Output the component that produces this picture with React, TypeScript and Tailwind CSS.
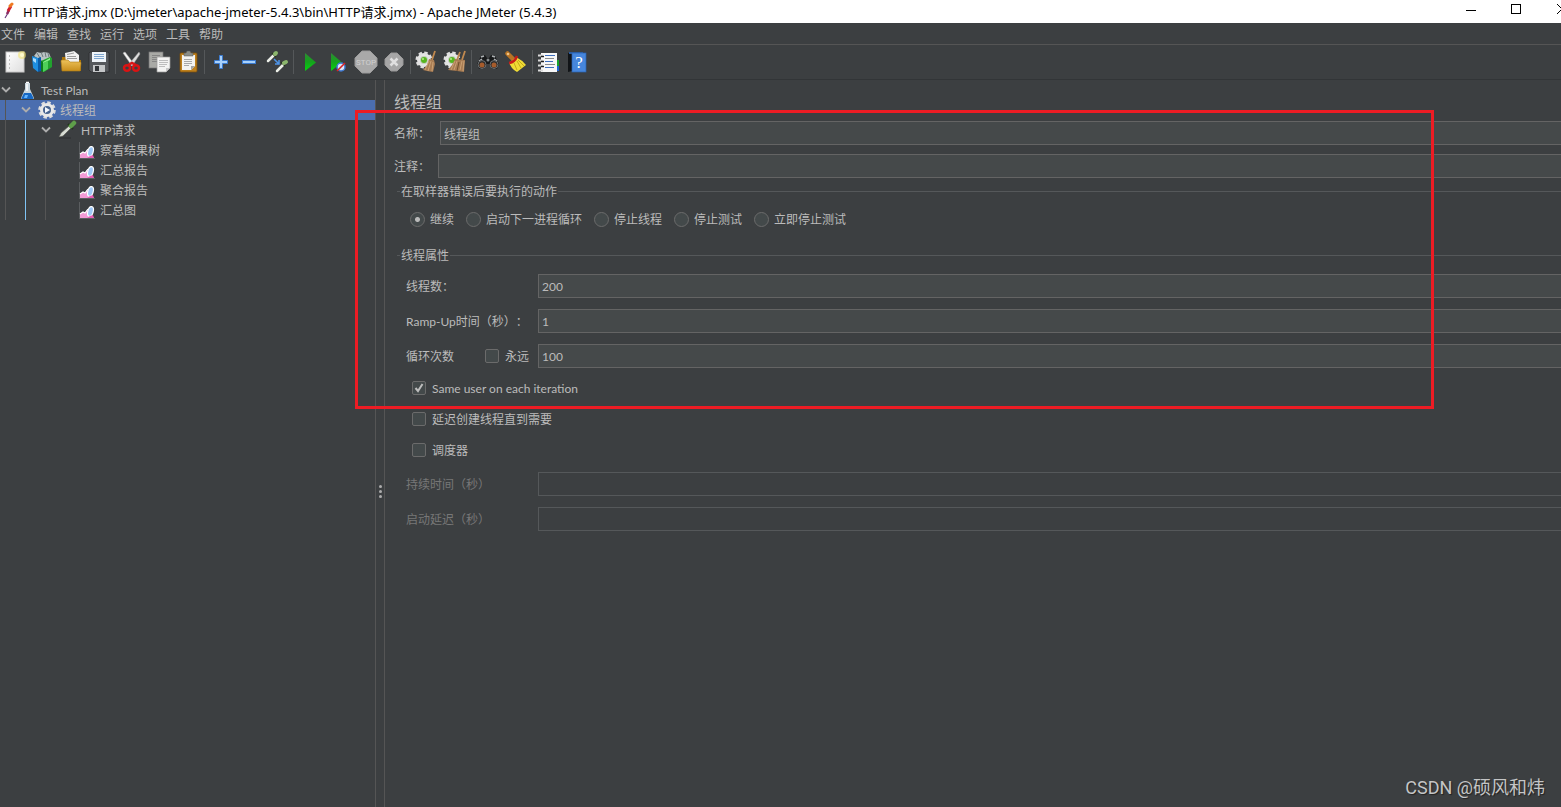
import type { ReactNode } from "react";

const fontStack = "font-[Lato,'Noto_Sans_CJK_SC',sans-serif]";

const menus = ["文件", "编辑", "查找", "运行", "选项", "工具", "帮助"];

const errorActions = ["继续", "启动下一进程循环", "停止线程", "停止测试", "立即停止测试"];

function Icon({ children }: { children: ReactNode }) {
  return (
    <svg width="24" height="24" viewBox="0 0 24 24" aria-hidden="true">
      {children}
    </svg>
  );
}

const NewIcon = () => (
  <Icon>
    <rect x="3" y="2" width="18" height="20" fill="url(#paper)" stroke="#c9c9c9" />
    <path d="M6 6h1M6 10h1M6 14h1M6 18h1" stroke="#8a8a8a" />
    <circle cx="19" cy="5" r="4" fill="#f5e66a" opacity=".55" />
    <circle cx="19" cy="5" r="2" fill="#fffbd0" />
  </Icon>
);

const TemplatesIcon = () => (
  <Icon>
    <path d="M3 6l3-4 4 1 3-1 5 1 2 5-9 3z" fill="#b9c2c4" />
    <path d="M6 3l3 5M10 2l2 5M14 2l1 5M17 3l1 4" stroke="#6f7a7c" />
    <path d="M1 6l6 2v14l-5-4z" fill="#1f8fe0" />
    <path d="M2 8l3 1v4l-3-2z" fill="#a9dcff" />
    <path d="M7 8l3-1v14l-3 1z" fill="#0b5ca8" />
    <path d="M10 11l9-4 2 1v9l-8 5-3-1z" fill="#21a32e" />
    <path d="M10 11l2 1v10l-2-1z" fill="#0d7a1c" />
    <path d="M12 13l5-2v8l-5 3z" fill="#4fd05a" />
    <path d="M12 12l7-4v2l-7 3z" fill="#8cf08e" />
  </Icon>
);

const OpenIcon = () => (
  <Icon>
    <path d="M3 7h4l2 3h13v11H3z" fill="#a8730a" />
    <path d="M6 3l9-2 5 4v9H7z" fill="#f2f2f2" />
    <path d="M8 4.500l7-1.500M8 6.500h9M8 8.500h10" stroke="#9b9b9b" />
    <path d="M2 11q0-1 1-1h6l2 2h10q1 0 1 1l-1 8H3z" fill="url(#folder)" stroke="#b37f14" strokeWidth=".6" />
  </Icon>
);

const SaveIcon = () => (
  <Icon>
    <path d="M3 2h18l1 1v19H4l-2-2V3z" fill="#55585c" stroke="#282a2c" strokeWidth=".7" />
    <rect x="5" y="2" width="14" height="10" fill="#eef3f8" />
    <path d="M7 4.500h10M7 6.500h10M7 8.500h10" stroke="#7fa6cf" />
    <rect x="6" y="15" width="12" height="7" fill="#c4c6c8" />
    <rect x="8" y="16" width="4" height="5" fill="#33363a" />
  </Icon>
);

const CutIcon = () => (
  <Icon>
    <path d="M3 3l2-1 9 12-2 2z" fill="#f4f4f4" stroke="#aaa" strokeWidth=".5" />
    <path d="M19 2l1 2-8 12-3-2z" fill="#dedede" stroke="#999" strokeWidth=".5" />
    <ellipse cx="7" cy="18" rx="3" ry="2.800" fill="none" stroke="#d91414" strokeWidth="2.500" />
    <ellipse cx="16" cy="18" rx="3" ry="2.800" fill="none" stroke="#d91414" strokeWidth="2.500" />
    <path d="M8 15l4-2 4 2" stroke="#d91414" strokeWidth="2.500" fill="none" />
  </Icon>
);

const CopyIcon = () => (
  <Icon>
    <rect x="1" y="2" width="14" height="16" fill="#a9aaa6" stroke="#777" strokeWidth=".7" />
    <path d="M4 5.500h8M4 7.500h8M4 9.500h6M4 11.500h6" stroke="#858585" />
    <path d="M9 7h13v11l-4 4H9z" fill="#f3f3f2" stroke="#999" strokeWidth=".7" />
    <path d="M11 10.500h9M11 12.500h9M11 14.500h8M11 16.500h6" stroke="#bdbdbd" />
    <path d="M22 18h-4v4z" fill="#c9c9c9" />
  </Icon>
);

const PasteIcon = () => (
  <Icon>
    <rect x="4" y="3" width="17" height="19" rx="1" fill="#bd801d" stroke="#7c4f0a" strokeWidth=".8" />
    <path d="M6 5h13v11l-4 4H6z" fill="#f3f3f1" />
    <path d="M8 9.500h8M8 11.500h8M8 13.500h8M8 15.500h5" stroke="#a8a8a8" />
    <path d="M19 16h-4v4z" fill="#a5a5a5" />
    <path d="M8 3h2l1-2h3l1 2h2v3H8z" fill="#8a8d88" stroke="#555" strokeWidth=".5" />
  </Icon>
);

const PlusIcon = () => (
  <Icon>
    <path d="M10.500 5.500h3v5h5v3h-5v5h-3v-5h-5v-3h5z" fill="#a8d1fb" stroke="#3b7bd0" />
  </Icon>
);

const MinusIcon = () => (
  <Icon>
    <rect x="5.500" y="10.500" width="13" height="3" fill="#a8d1fb" stroke="#3b7bd0" />
  </Icon>
);

const ToggleIcon = () => (
  <Icon>
    <path d="M3 11l6-6" stroke="#ecefe8" strokeWidth="2.500" strokeLinecap="round" />
    <path d="M7 3l4 4" stroke="#26351f" strokeWidth="1.500" />
    <path d="M10 4l1-1" stroke="#8bb56c" strokeWidth="4" strokeLinecap="round" />
    <path d="M12 21l6-6" stroke="#ecefe8" strokeWidth="2.500" strokeLinecap="round" />
    <path d="M16 12l4 4" stroke="#26351f" strokeWidth="1.500" />
    <path d="M19 13l2-1" stroke="#8bb56c" strokeWidth="4" strokeLinecap="round" />
    <path d="M9 9l5 5m0-4v4h-4" stroke="#4d94e8" strokeWidth="1.500" fill="none" />
  </Icon>
);

const StartIcon = () => (
  <Icon>
    <path d="M7 3l11 9.500L7 21z" fill="url(#play)" />
  </Icon>
);

const StartNoPauseIcon = () => (
  <Icon>
    <path d="M5 3l11 9.500L5 21z" fill="url(#play)" />
    <circle cx="15" cy="17" r="4" fill="#d9e7fb" stroke="#3f78d1" strokeWidth="1.500" />
    <path d="M11 21l8-8" stroke="#d82020" strokeWidth="1.600" />
  </Icon>
);

const StopIcon = () => (
  <Icon>
    <path d="M8 1h8l7 7v8l-7 7H8l-7-7V8z" fill="#a9a9a9" stroke="#9b9b9b" />
    <text x="12" y="15" textAnchor="middle" fontSize="8" fontFamily="Roboto, sans-serif" fill="#d0d0d0">
      STOP
    </text>
  </Icon>
);

const ShutdownIcon = () => (
  <Icon>
    <path d="M9 3h6l6 6v6l-6 6H9l-6-6V9z" fill="#a6a6a6" stroke="#999" />
    <path d="M8.500 8.500l7 7m0-7l-7 7" stroke="#e0e0e0" strokeWidth="2.500" />
  </Icon>
);

const Gear = () => (
  <>
    <circle cx="9" cy="10" r="7" fill="#e6e6e6" stroke="#e0e0e0" strokeWidth="3" strokeDasharray="3.300 2.200" />
    <circle cx="9" cy="10" r="4" fill="#c3cdbb" />
    <circle cx="9" cy="10" r="3" fill="#56b51f" />
    <circle cx="8" cy="9" r="1" fill="#b7ec8d" />
  </>
);

const ClearIcon = () => (
  <Icon>
    <Gear />
    <path d="M20 1l-3 9" stroke="#c0894f" strokeWidth="1.800" />
    <path d="M14 9l5 1 1 4-2 8-6-1-4-1 4-5z" fill="#a87c53" />
    <path d="M14 11l-4 9M16 11l-3 10M18 12l-1 9" stroke="#d3aa7c" strokeWidth=".8" />
  </Icon>
);

const ClearAllIcon = () => (
  <Icon>
    <Gear />
    <path d="M17 2l-3 8M22 1l-3 9" stroke="#c0894f" strokeWidth="1.800" />
    <path d="M12 9l10 1-1 12-7-1-9-1 4-5z" fill="#a87c53" />
    <path d="M12 11l-4 9M14 11l-3 9M19 11l-2 9M21 11l-1 10" stroke="#d3aa7c" strokeWidth=".8" />
    <path d="M16 12l-2 9" stroke="#6f4e2e" />
  </Icon>
);

const SearchIcon = () => (
  <Icon>
    <path d="M5 6l4-1 2 3h2l2-3 4 1 4 8-2 5h-5l-3-5h-2l-3 5H3l-2-5z" fill="#17191a" />
    <path d="M5 7l3-1M16 6l3 1M3 11l3-2M18 9l3 2" stroke="#aeb2b4" strokeWidth="1.500" />
    <circle cx="6" cy="14.500" r="4" fill="#2b2b2b" stroke="#6e7173" />
    <circle cx="18" cy="14.500" r="4" fill="#2b2b2b" stroke="#6e7173" />
    <circle cx="6" cy="15" r="2.500" fill="#a65c2c" />
    <circle cx="18" cy="15" r="2.500" fill="#a65c2c" />
    <circle cx="12" cy="10" r="1.500" fill="#888c8e" />
  </Icon>
);

const ResetSearchIcon = () => (
  <Icon>
    <path d="M3.500 3.500l6 6" stroke="#b87425" strokeWidth="4.500" strokeLinecap="round" />
    <circle cx="4" cy="4" r="1.300" fill="#f0c283" />
    <path d="M12 7q6 3 10 8l-9 7-3-2-2-2-3-5z" fill="#f0dc35" />
    <path d="M10 13l3 7M13 11l4 7M14 10l6 6" stroke="#b0920f" strokeWidth=".7" />
    <path d="M5 13q6-1 8-7" stroke="#c91d18" strokeWidth="2.500" fill="none" />
  </Icon>
);

const LogIcon = () => (
  <Icon>
    <rect x="19" y="10" width="3" height="6" fill="#17a32b" />
    <rect x="19" y="16" width="3" height="5" fill="#1f64d0" />
    <rect x="4" y="3" width="16" height="19" fill="#f7f7f7" />
    <path d="M8 5.500h10M8 11.500h8M8 17.500h9" stroke="#3e6fbf" />
    <path d="M8 8.500h9M8 14.500h10" stroke="#8a8a8a" />
    <path d="M1 5.500h5M1 10.500h5M1 15.500h5M1 20.500h5" stroke="#dadada" strokeWidth="2" />
    <path d="M4 6.500h3M4 11.500h3M4 16.500h3" stroke="#222" strokeWidth="1.500" />
  </Icon>
);

const HelpIcon = () => (
  <Icon>
    <path d="M3 3l4-1v19l-4 1z" fill="#111417" />
    <path d="M4 2h14v2H4z" fill="#2c5b9c" />
    <rect x="7" y="3" width="14" height="19" fill="#4686dc" stroke="#2a62b3" strokeWidth=".7" />
    <text x="14" y="18" textAnchor="middle" fontSize="17" fontFamily="Liberation Serif, serif" fill="#fff">
      ?
    </text>
  </Icon>
);

const toolGroups = [
  [
    { label: "新建", icon: <NewIcon /> },
    { label: "模板", icon: <TemplatesIcon /> },
    { label: "打开", icon: <OpenIcon /> },
    { label: "保存", icon: <SaveIcon /> },
  ],
  [
    { label: "剪切", icon: <CutIcon /> },
    { label: "复制", icon: <CopyIcon /> },
    { label: "粘贴", icon: <PasteIcon /> },
  ],
  [
    { label: "展开", icon: <PlusIcon /> },
    { label: "折叠", icon: <MinusIcon /> },
    { label: "切换", icon: <ToggleIcon /> },
  ],
  [
    { label: "启动", icon: <StartIcon /> },
    { label: "不停顿开始", icon: <StartNoPauseIcon /> },
    { label: "停止", icon: <StopIcon /> },
    { label: "关闭", icon: <ShutdownIcon /> },
  ],
  [
    { label: "清除", icon: <ClearIcon /> },
    { label: "清除全部", icon: <ClearAllIcon /> },
  ],
  [
    { label: "搜索", icon: <SearchIcon /> },
    { label: "重置搜索", icon: <ResetSearchIcon /> },
  ],
  [
    { label: "函数助手", icon: <LogIcon /> },
    { label: "帮助", icon: <HelpIcon /> },
  ],
];

function Gradients() {
  return (
    <svg width="0" height="0" className="absolute" aria-hidden="true">
      <defs>
        <linearGradient id="paper" x1="0" y1="0" x2="1" y2="1">
          <stop offset="0" stopColor="#fff" />
          <stop offset="1" stopColor="#dedede" />
        </linearGradient>
        <linearGradient id="folder" x1="0" y1="0" x2="0" y2="1">
          <stop offset="0" stopColor="#edc25a" />
          <stop offset="1" stopColor="#c98f1c" />
        </linearGradient>
        <linearGradient id="play" x1="0" y1="0" x2="0" y2="1">
          <stop offset="0" stopColor="#2f8a35" />
          <stop offset=".5" stopColor="#14a31c" />
          <stop offset="1" stopColor="#05d80f" />
        </linearGradient>
      </defs>
    </svg>
  );
}

function TitleBar() {
  return (
    <header className="flex h-[23px] items-center bg-white text-black">
      <svg width="16" height="20" viewBox="0 0 16 20" className="ml-[2px] shrink-0" aria-hidden="true">
        <path d="M3 16l3-5" stroke="#6b3a7c" strokeWidth="1.200" />
        <path d="M5 12l2-4" stroke="#8e2b62" strokeWidth="2.500" />
        <path d="M6 9l3-5" stroke="#d0202e" strokeWidth="3" />
        <path d="M8 4l2-2" stroke="#ef7a22" strokeWidth="3" strokeLinecap="round" />
      </svg>
      <h1 className="ml-[5px] grow truncate font-['Noto_Sans','Noto_Sans_CJK_SC',sans-serif] text-[13px] leading-5">
        HTTP请求.jmx (D:\jmeter\apache-jmeter-5.4.3\bin\HTTP请求.jmx) - Apache JMeter (5.4.3)
      </h1>
      <button aria-label="最小化" className="flex h-5 w-[45px] items-center justify-center">
        <svg width="10" height="10" viewBox="0 0 10 10">
          <path d="M0 3.500h10" stroke="#000" />
        </svg>
      </button>
      <button aria-label="最大化" className="flex h-5 w-[45px] items-center justify-center pb-[5px]">
        <svg width="10" height="10" viewBox="0 0 10 10">
          <rect x=".5" y=".5" width="9" height="9" fill="none" stroke="#000" />
        </svg>
      </button>
      <button aria-label="关闭" className="flex h-5 w-[23px] items-center justify-end pb-[5px]">
        <svg width="5" height="10" viewBox="0 0 5 10">
          <path d="M1 0l5 5-5 5" fill="none" stroke="#000" />
        </svg>
      </button>
    </header>
  );
}

function Toolbar() {
  return (
    <div className="flex h-[35px] border-b border-[#323537] pl-px">
      {toolGroups.map((group, i) => (
        <div key={i} className="flex items-center">
          {i > 0 && (
            <div className="flex w-[5px] justify-center">
              <div className="h-6 w-px bg-[#55585a]" />
            </div>
          )}
          {group.map((tool) => (
            <button key={tool.label} aria-label={tool.label} className="flex w-7 justify-center">
              {tool.icon}
            </button>
          ))}
        </div>
      ))}
    </div>
  );
}

const Chevron = () => (
  <svg width="10" height="8" viewBox="0 0 10 8" className="shrink-0" aria-hidden="true">
    <path d="M1 1.500l4 4 4-4" fill="none" stroke="#adadad" strokeWidth="1.800" />
  </svg>
);

const FlaskIcon = () => (
  <svg width="20" height="20" viewBox="0 0 20 20" className="shrink-0" aria-hidden="true">
    <path d="M8 3h5v6l4 9q0 1-1 1H5q-1 0-1-1l4-9z" fill="#c9d6de" />
    <path d="M9 2.500h3M10 4v7" stroke="#fff" strokeWidth="1.500" />
    <path d="M7 13h7l2.500 5q0 1-1 1h-10q-1 0-1-1z" fill="#1668c4" />
    <path d="M8 15h3l-1 3H7z" fill="#62b4ff" />
  </svg>
);

const ThreadIcon = () => (
  <svg width="20" height="20" viewBox="0 0 20 20" className="shrink-0" aria-hidden="true">
    <circle cx="10" cy="10" r="7.300" fill="none" stroke="#dcdcdc" strokeWidth="3" strokeDasharray="3.400 2.330" />
    <circle cx="10" cy="10" r="5.500" fill="#46638f" stroke="#e8e8e8" strokeWidth="3" />
    <path d="M8 7l5 3-5 3z" fill="#f4f8ff" />
  </svg>
);

const PipetteIcon = () => (
  <svg width="20" height="20" viewBox="0 0 20 20" className="shrink-0" aria-hidden="true">
    <path d="M2 18h12" stroke="#323436" strokeWidth="1.500" />
    <path d="M2 17l2-4 8-7 2 2-8 8z" fill="#d8dcd4" stroke="#55584f" strokeWidth=".6" />
    <path d="M11 4l5 5" stroke="#23371b" strokeWidth="2" />
    <path d="M14 6l3-3" stroke="#5fa04a" strokeWidth="4.500" strokeLinecap="round" />
  </svg>
);

const ChartIcon = () => (
  <svg width="18" height="20" viewBox="0 0 18 20" className="shrink-0" aria-hidden="true">
    <path d="M1.500 2v17M1 18.500h16" stroke="#5b5e60" />
    <path d="M2 18v-4l3-2 2 1 2-3 7 8z" fill="#f29bd6" />
    <path d="M2 14l3-2 2 1 3-4" stroke="#fff" strokeWidth="1.200" fill="none" />
    <ellipse cx="12.500" cy="11.500" rx="2.700" ry="5" transform="rotate(15 12.500 11.500)" fill="#9fc8f7" stroke="#fff" strokeWidth="1.200" />
    <path d="M9 18l3-2 3-1 1 3z" fill="#e660b5" />
  </svg>
);

// Tree row text, dropped slightly to sit level with its icon
const NodeName = ({ children }: { children: ReactNode }) => <span className="pt-[2px]">{children}</span>;

const listeners = ["察看结果树", "汇总报告", "聚合报告", "汇总图"];

function Tree() {
  return (
    <nav className="w-[376px] shrink-0 border-r border-[#555] text-[#bbb]">
      <ul>
        <li>
          <div className="flex h-5 items-center pl-px">
            <Chevron />
            <span className="ml-[6px] flex items-center gap-1">
              <FlaskIcon />
              <NodeName>Test Plan</NodeName>
            </span>
          </div>
          <ul>
            <li>
              <div className="ml-[5px] flex h-5 items-center border-l border-[#555] bg-[#4b6eaf] pl-[15px] shadow-[-5px_0_0_#4b6eaf]">
                <Chevron />
                <span className="ml-[6px] flex items-center gap-[3px]">
                  <ThreadIcon />
                  <NodeName>线程组</NodeName>
                </span>
              </div>
              <ul className="ml-[5px] border-l border-[#555] pl-[19px]">
                <li className="border-l border-[#7fc4f5]">
                  <div className="flex h-5 items-center pl-[15px]">
                    <Chevron />
                    <span className="ml-[6px] flex items-center gap-1">
                      <PipetteIcon />
                      <NodeName>HTTP请求</NodeName>
                    </span>
                  </div>
                  <ul className="ml-[19px] border-l border-[#555] pl-8">
                    {listeners.map((name) => (
                      <li key={name} className="flex h-5 items-center gap-1">
                        <ChartIcon />
                        <NodeName>{name}</NodeName>
                      </li>
                    ))}
                  </ul>
                </li>
              </ul>
            </li>
          </ul>
        </li>
      </ul>
    </nav>
  );
}

const inputClass =
  "h-6 min-w-0 grow border border-r-0 border-[#646464] bg-[#45494a] px-[3px] text-[#bbb] outline-none disabled:border-[#55585a] disabled:bg-transparent";

function Field({ id, label, value, disabled }: { id: string; label: string; value?: string; disabled?: boolean }) {
  return (
    <div className="flex items-center">
      <label htmlFor={id} className={`w-[132px] shrink-0 pt-[2px] ${disabled ? "text-[#777]" : ""}`}>
        {label}
      </label>
      <input id={id} type="text" defaultValue={value} disabled={disabled} className={inputClass} />
    </div>
  );
}

function Checkbox({ label, checked }: { label: string; checked?: boolean }) {
  return (
    <label className="flex h-5 items-center gap-[6px]">
      <span className="grid">
        <input
          type="checkbox"
          defaultChecked={checked}
          className="peer col-start-1 row-start-1 size-[14px] appearance-none rounded-[2px] border border-[#6b6b6b] bg-[#43494a]"
        />
        <svg
          width="14"
          height="14"
          viewBox="0 0 14 14"
          className="invisible col-start-1 row-start-1 peer-checked:visible"
          aria-hidden="true"
        >
          <path d="M3.500 7l2.500 3 4.500-7" fill="none" stroke="#bdbdbd" strokeWidth="2" />
        </svg>
      </span>
      <span className="pt-[2px]">{label}</span>
    </label>
  );
}

function Radio({ label, checked }: { label: string; checked?: boolean }) {
  return (
    <label className="flex items-center gap-[5px]">
      <input
        type="radio"
        name="on-error"
        defaultChecked={checked}
        className="size-[15px] appearance-none rounded-full border border-[#6b6b6b] bg-[#43494a] checked:bg-[radial-gradient(circle,#bababa_2px,#43494a_3px)]"
      />
      <span className="pt-[2px]">{label}</span>
    </label>
  );
}

function ThreadGroupPanel() {
  return (
    <main className="min-w-0 grow border-l border-[#555] pl-[9px] pt-3 text-[#bbb] [text-spacing-trim:space-all]">
      <h2 className="h-5 text-base leading-5">线程组</h2>
      <div className="mt-[9px] flex items-center">
        <label htmlFor="name" className="w-[46px] shrink-0 pt-[2px]">
          名称：
        </label>
        <input id="name" type="text" defaultValue="线程组" className={inputClass} />
      </div>
      <div className="mt-[9px] flex items-center">
        <label htmlFor="comment" className="w-11 shrink-0 pt-[2px]">
          注释：
        </label>
        <input id="comment" type="text" className={inputClass} />
      </div>

      <fieldset className="ml-[3px] mt-1 border-t border-[#55585a]">
        <legend className="ml-[3px] px-px pt-[2px]">在取样器错误后要执行的动作</legend>
        <div className="mt-2 flex h-[22px] items-center gap-3 pl-[13px]">
          {errorActions.map((action, i) => (
            <Radio key={action} label={action} checked={i === 0} />
          ))}
        </div>
      </fieldset>

      <fieldset className="ml-[3px] mt-4 border-t border-[#55585a]">
        <legend className="ml-[3px] px-px pt-[2px]">线程属性</legend>
        <div className="mt-[10px] flex flex-col gap-[11px] pl-[9px]">
          <Field id="threads" label="线程数：" value="200" />
          <Field id="ramp-up" label="Ramp-Up时间（秒）：" value="1" />
          <div className="flex items-center">
            <label htmlFor="loops" className="w-[79px] shrink-0 pt-[2px]">
              循环次数
            </label>
            <div className="w-[53px] shrink-0">
              <Checkbox label="永远" />
            </div>
            <input id="loops" type="text" defaultValue="100" className={inputClass} />
          </div>
        </div>
        <div className="mt-[10px] flex flex-col gap-[11px] pl-[15px]">
          <Checkbox label="Same user on each iteration" checked />
          <Checkbox label="延迟创建线程直到需要" />
          <Checkbox label="调度器" />
        </div>
        <div className="mt-3 flex flex-col gap-[11px] pl-[9px]">
          <Field id="duration" label="持续时间（秒）" disabled />
          <Field id="delay" label="启动延迟（秒）" disabled />
        </div>
      </fieldset>
    </main>
  );
}

export default function App() {
  return (
    <div className={`relative flex min-h-screen flex-col overflow-hidden bg-[#3c3f41] text-xs ${fontStack}`}>
      <Gradients />
      <TitleBar />

      {/* Menu bar */}
      <div className="flex h-[22px] items-center gap-[9px] border-b border-[#555] pl-px pt-[2px] text-[#bbb]">
        {menus.map((menu) => (
          <button key={menu}>{menu}</button>
        ))}
      </div>
      <Toolbar />

      <div className="flex grow">
        <Tree />
        {/* Split pane handle */}
        <div className="flex w-2 shrink-0 flex-col items-center justify-center gap-[2px] pt-24">
          <span className="size-[3px] rounded-full bg-[#adadad]" />
          <span className="size-[3px] rounded-full bg-[#adadad]" />
          <span className="size-[3px] rounded-full bg-[#adadad]" />
        </div>
        <ThreadGroupPanel />
      </div>

      {/* Highlight frame over the form */}
      <div className="pointer-events-none absolute left-[355px] top-[110px] h-[299px] w-[1079px] border-3 border-[#ed1c24]" />

      <p className="pointer-events-none absolute bottom-[7px] right-4 font-[Roboto,'Noto_Sans_CJK_SC',sans-serif] text-lg leading-6 text-[#c4c5c6] [text-shadow:1px_1px_1px_#222]">
        CSDN @硕风和炜
      </p>
    </div>
  );
}
